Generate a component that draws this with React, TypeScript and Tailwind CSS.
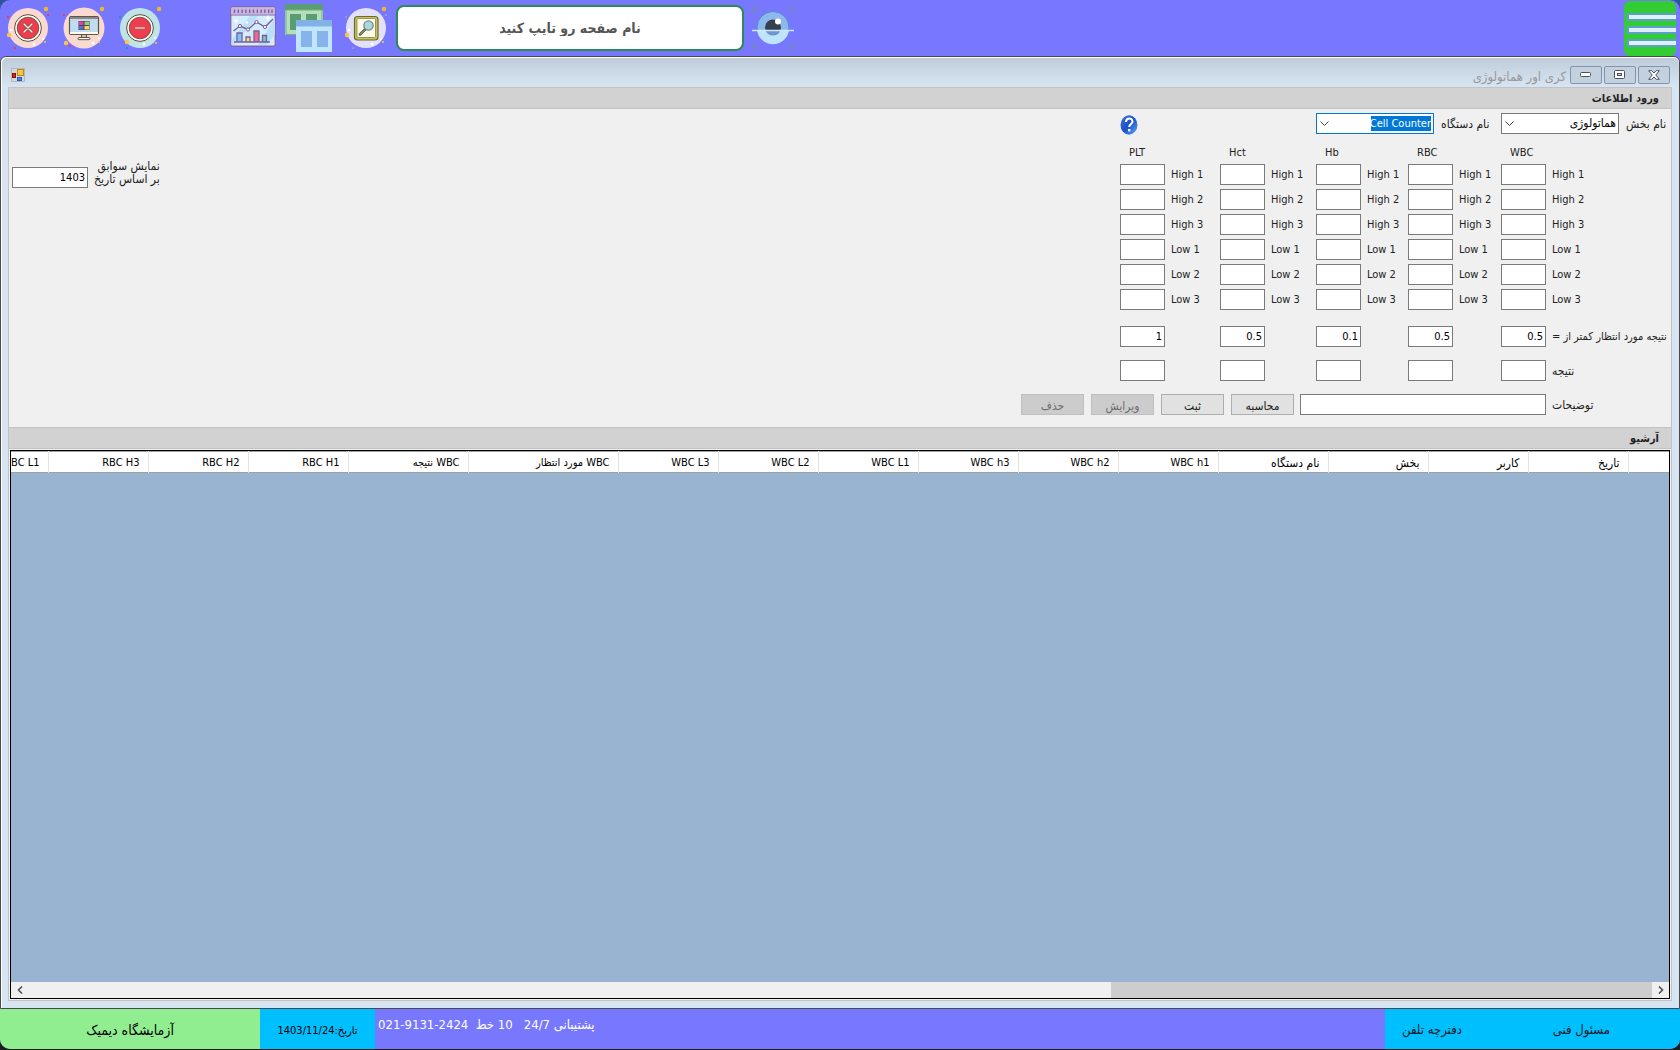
import React from "react";

const COLUMNS = [
  { name: "PLT", limit: "1" },
  { name: "Hct", limit: "0.5" },
  { name: "Hb", limit: "0.1" },
  { name: "RBC", limit: "0.5" },
  { name: "WBC", limit: "0.5" },
];

const LEVELS = ["High 1", "High 2", "High 3", "Low 1", "Low 2", "Low 3"];

const HEADINGS: { text: string; width: string }[] = [
  { text: "", width: "w-[41px]" },
  { text: "تاریخ", width: "w-[100px] text-xs" },
  { text: "کاربر", width: "w-[100px] text-xs" },
  { text: "بخش", width: "w-[100px] text-xs" },
  { text: "نام دستگاه", width: "w-[110px] text-xs" },
  { text: "WBC h1", width: "w-[100px]" },
  { text: "WBC h2", width: "w-[100px]" },
  { text: "WBC h3", width: "w-[100px]" },
  { text: "WBC L1", width: "w-[100px]" },
  { text: "WBC L2", width: "w-[100px]" },
  { text: "WBC L3", width: "w-[100px]" },
  { text: "WBC مورد انتظار", width: "w-[150px]" },
  { text: "WBC نتیجه", width: "w-[120px]" },
  { text: "RBC H1", width: "w-[100px]" },
  { text: "RBC H2", width: "w-[100px]" },
  { text: "RBC H3", width: "w-[100px]" },
  { text: "RBC L1", width: "w-[100px]" },
];

const GRID = "grid grid-cols-[100px_96px_92px_93px_170px]";
const BOX = "h-[21px] border border-[#7a7a7a] bg-white px-0.5 text-right text-black outline-none";

function Sparks({ a, b }: { a: string; b: string }) {
  return (
    <g>
      <circle cx="40" cy="3" r="2.2" fill="#f5b81f" />
      <circle cx="3" cy="29" r="2.2" fill="#fcc544" />
      <circle cx="39" cy="36" r="1.1" fill="#fcc544" />
      <rect x="1" y="10" width="2" height="2" fill={a} />
      <rect x="41" y="8" width="2" height="2" fill={b} />
      <rect x="8" y="41" width="2" height="2" fill={a} />
      <circle cx="5" cy="24" r="1.3" fill="#fff" />
      <circle cx="28" cy="38" r="1.5" fill="#fff" />
      <circle cx="37" cy="33" r="1" fill="#fff" />
    </g>
  );
}

function CloseIcon() {
  return (
    <svg viewBox="0 0 44 44" className="size-11">
      <circle cx="22" cy="22" r="20" fill="#fad9d0" />
      <Sparks a="#ee3c50" b="#ee3c50" />
      <circle cx="22" cy="22" r="13.4" fill="#fffdf0" stroke="#5f4a42" strokeWidth="1" />
      <circle cx="22" cy="22" r="10.8" fill="#ee3c50" stroke="#5f4a42" strokeWidth="0.8" />
      <path d="M18 18l8 8M26 18l-8 8" stroke="#7d4a42" strokeWidth="2.6" strokeLinecap="round" />
      <path d="M18 18l8 8M26 18l-8 8" stroke="#fff3dc" strokeWidth="1.4" strokeLinecap="round" />
    </svg>
  );
}

function MonitorIcon() {
  return (
    <svg viewBox="0 0 44 44" className="size-11">
      <circle cx="22" cy="22" r="20.5" fill="#fad9d0" />
      <circle cx="40" cy="3" r="2.2" fill="#f5b81f" />
      <circle cx="4" cy="37" r="2.2" fill="#fcc544" />
      <circle cx="37" cy="36" r="1.1" fill="#fcc544" />
      <rect x="1" y="8" width="2" height="2" fill="#ee3c50" />
      <rect x="7" y="39" width="2" height="2" fill="#ee3c50" />
      <circle cx="31" cy="37" r="1.5" fill="#fff" />
      <circle cx="37" cy="32" r="1" fill="#fff" />
      <path d="M19.5 28h5v4h-5z" fill="#c9c2ad" stroke="#5f544a" />
      <rect x="16" y="31.5" width="12" height="2.2" rx="1" fill="#fffdf0" stroke="#5f544a" />
      <rect x="7.500" y="10.500" width="29" height="18" rx="1.500" fill="#c0dcf0" stroke="#5f544a" strokeWidth="1.200" />
      <path d="M8 11h28v2H8z" fill="#8d8585" />
      <path d="M8 26h28v2H8z" fill="#fffdf0" />
      <rect x="16.500" y="15" width="11" height="9" fill="#4a4650" />
      <path d="M17 15.500h4.500v3.500H17z" fill="#ee3c9a" />
      <path d="M22.500 15.500H27v3.500h-4.500z" fill="#8bcf80" />
      <path d="M17 20h4.500v3.500H17z" fill="#5570d8" />
      <path d="M22.500 20H27v3.500h-4.500z" fill="#f8dd50" />
    </svg>
  );
}

function MinusIcon() {
  return (
    <svg viewBox="0 0 44 44" className="size-11">
      <circle cx="22" cy="22" r="20" fill="#bfe4e6" />
      <circle cx="41" cy="3" r="2.2" fill="#f5b81f" />
      <circle cx="9" cy="36" r="2.2" fill="#fcc544" />
      <circle cx="38" cy="37" r="1.1" fill="#fcc544" />
      <rect x="1" y="10" width="2" height="2" fill="#1d9aa8" />
      <rect x="8" y="41" width="2" height="2" fill="#1d9aa8" />
      <circle cx="26" cy="38" r="1.5" fill="#fff" />
      <circle cx="37" cy="32" r="1" fill="#fff" />
      <circle cx="22" cy="22" r="13.4" fill="#fffdf0" stroke="#5f4a42" strokeWidth="1" />
      <circle cx="22" cy="22" r="10.8" fill="#ee3c50" stroke="#5f4a42" strokeWidth="0.8" />
      <rect x="17" y="21" width="10" height="2" fill="#cfc0ac" stroke="#9a6a60" strokeWidth="0.4" />
    </svg>
  );
}

function ChartIcon() {
  return (
    <svg viewBox="0 0 46 41" className="h-[41px] w-[46px]">
      <rect x="0.700" y="0.700" width="44.600" height="39.600" rx="1.500" fill="#d3edfd" stroke="#8a66a8" strokeWidth="1.400" />
      <path d="M28 39L45 12v16l-8 11zM1.500 34L20 10h8L4 39H1.500z" fill="#b9e0f8" />
      <path d="M1.400 1.400h43.200v7H1.400z" fill="#c7b6e0" />
      <path d="M1 9h44" stroke="#8a66a8" strokeWidth="1.200" />
      <path d="M4.500 3.500v3.500M8.300 3.500v3.500M12.100 3.500v3.500M15.900 3.500v3.500M19.700 3.500v3.500M23.500 3.500v3.500M27.300 3.500v3.500M31.100 3.500v3.500M34.900 3.500v3.500M38.700 3.500v3.500M42 3.500v3.500" stroke="#7c5c9c" strokeWidth="1.300" />
      <path d="M6 12l.9 2.100 2.100.9-2.100.9L6 18l-.9-2.100L3 15l2.100-.9zM17 15l1.500 1.500L17 18l-1.500-1.500zM38 9l1 2 2 1-2 1-1 2-1-2-2-1 2-1z" fill="#fff" />
      <path d="M7 27h5v9H7z" fill="#7cc6f4" />
      <path d="M16 31h4v5h-4z" fill="#f8dc78" />
      <path d="M24 25h5v11h-5z" fill="#f06a8c" />
      <path d="M32.500 29.500h4v6.500h-4z" fill="#76ccb0" />
      <path d="M4 36h36M7 36v-9h5v9M16 36v-5h4v5M24 36V25h5v11M32.500 36v-6.500h4V36" fill="none" stroke="#7c5c9c" strokeWidth="1.300" />
      <path d="M3.500 25L10 20l8 3.500 8.500-7.500 8.500 5 8-8" fill="none" stroke="#7c5c9c" strokeWidth="1.400" />
      <g fill="#fff" stroke="#7c5c9c">
        <circle cx="10" cy="20" r="1.600" />
        <circle cx="18" cy="23.500" r="1.600" />
        <circle cx="26.500" cy="16" r="1.600" />
        <circle cx="35" cy="21" r="1.600" />
      </g>
    </svg>
  );
}

function WindowsIcon() {
  return (
    <svg viewBox="0 0 48 48" className="size-12">
      <path d="M0 0h38v31H0z" fill="#b5dfb8" />
      <path d="M0 0h38v6H0z" fill="#5c9c72" />
      <path d="M1 6h36v24.500H1z" fill="none" stroke="#6fb085" />
      <path d="M5 10h11v16H5zM21 10h11v16H21z" fill="#5c9c72" />
      <path d="M11 16h36v32H11z" fill="#c0e6fd" />
      <path d="M11 16h36v6.500H11z" fill="#82b1e8" />
      <path d="M16 27h11v16H16zM32 27h11v16H32z" fill="#86b3ec" />
    </svg>
  );
}

function FindIcon() {
  return (
    <svg viewBox="0 0 44 44" className="size-11">
      <circle cx="22" cy="22" r="20" fill="#e2e1f7" />
      <Sparks a="#9a98d0" b="#9a98d0" />
      <rect x="10.500" y="10.500" width="23.500" height="23.500" rx="3" fill="#c4c45c" stroke="#6e6a2c" strokeWidth="1.200" />
      <rect x="13" y="12.500" width="18.500" height="19" rx="1" fill="#fffcec" stroke="#7a7636" strokeWidth="0.700" />
      <path d="M16 28.500l5.500-5.500" stroke="#5a6a48" strokeWidth="2.800" strokeLinecap="round" />
      <path d="M16.300 28.200l4-4" stroke="#9ab070" strokeWidth="1" />
      <circle cx="24.500" cy="19.500" r="4.600" fill="#a8d8dc" stroke="#7a8a94" strokeWidth="1.400" />
    </svg>
  );
}

function EyeIcon() {
  return (
    <svg viewBox="0 0 42 42" className="size-[42px]">
      <path d="M1 7V1h6M35 1h6v6M1 35v6h6M35 41h6v-6" fill="none" stroke="#7488b8" strokeWidth="1.600" />
      <circle cx="21" cy="20.500" r="16" fill="#8cb8ee" stroke="#5a86cc" />
      <circle cx="21" cy="20.500" r="8" fill="#35404e" />
      <path d="M5 23.500a16.200 16.200 0 0 0 32 0z" fill="#bfe5fd" />
      <path d="M13.600 23.500a8 8 0 0 0 14.800 0z" fill="#6f96cc" />
      <circle cx="26" cy="14.500" r="3" fill="#fff" />
      <path d="M0 23.500h42" stroke="#cfe8ff" strokeWidth="1.400" />
    </svg>
  );
}

function FormIcon() {
  return (
    <svg viewBox="0 0 14 14" className="size-3.5">
      <rect x="0.500" y="0.500" width="13" height="13" fill="#d4d8dc" stroke="#b4b8bc" />
      <rect x="6.500" y="1.500" width="6" height="6" fill="#f8c838" stroke="#b88818" />
      <rect x="1.500" y="5.500" width="3" height="4" fill="#d82818" stroke="#8c1008" />
      <rect x="6.500" y="9.500" width="4" height="3" fill="#4888e8" stroke="#2858b8" />
    </svg>
  );
}

function HelpIcon() {
  return (
    <svg viewBox="0 0 18 20" className="h-5 w-[18px]">
      <defs>
        <linearGradient id="help" x1="0" y1="0" x2="1" y2="1">
          <stop offset="0" stopColor="#3f74e0" />
          <stop offset="0.500" stopColor="#1c4fc8" />
          <stop offset="1" stopColor="#5fb0ff" />
        </linearGradient>
      </defs>
      <ellipse cx="9" cy="10" rx="8.500" ry="9.700" fill="url(#help)" />
      <path d="M6 7c0-4.500 6.500-4.500 6.500-.5 0 2.500-3.300 2.500-3.300 5.500" fill="none" stroke="#fff" strokeWidth="2" />
      <rect x="8" y="14" width="2.400" height="2.400" fill="#fff" />
    </svg>
  );
}

function ToolButton({ label, children, className = "" }: { label: string; children: React.ReactNode; className?: string }) {
  return (
    <button type="button" aria-label={label} className={`shrink-0 ${className}`}>
      {children}
    </button>
  );
}

function SectionHeader({ children }: { children: React.ReactNode }) {
  return (
    <h2 dir="rtl" className="flex h-[22px] shrink-0 items-center border-y border-[#c3c3c3] bg-[#d2d2d2] px-3 pt-0.5 font-bold text-[#222]">
      {children}
    </h2>
  );
}

function Combo({ id, value, active = false }: { id: string; value: string; active?: boolean }) {
  return (
    <div className={`relative h-[21px] w-[118px] border bg-white py-0.5 pr-0.5 ${active ? "border-[#0078d7]" : "border-[#7a7a7a]"}`}>
      <select
        id={id}
        dir="rtl"
        className={`block h-[15px] w-full appearance-none leading-[15px] outline-none ${active ? "bg-[#0078d7] bg-clip-content pl-[54px] text-white" : "pl-5 text-xs text-black"}`}
      >
        <option>{value}</option>
      </select>
      <svg viewBox="0 0 9 5" className="pointer-events-none absolute top-[7px] left-[3px] h-[5px] w-[9px]">
        <path d="M.5.500l4 4 4-4" fill="none" stroke="#444" />
      </svg>
    </div>
  );
}

function Action({ children, disabled = false }: { children: string; disabled?: boolean }) {
  return (
    <button
      type="button"
      disabled={disabled}
      className={`h-[21px] w-[63px] border pt-0.5 text-xs ${disabled ? "border-[#bfbfbf] bg-[#cccccc] text-[#6d6d6d]" : "border-[#adadad] bg-[#e1e1e1] text-[#222]"}`}
    >
      {children}
    </button>
  );
}

function CaptionButton({ label, children }: { label: string; children: React.ReactNode }) {
  return (
    <button type="button" aria-label={label} className="flex h-[18px] w-8 items-center justify-center rounded-xs border border-[#8593ad] bg-[#c3d1df]">
      {children}
    </button>
  );
}

function TopBar() {
  return (
    <header className="shrink-0 bg-[#2a5599]">
      <div className="flex h-14 items-center rounded-t-[10px] bg-[#7878ff] pr-1 pl-1.5">
        <ToolButton label="بستن"><CloseIcon /></ToolButton>
        <ToolButton label="دسکتاپ" className="ml-3"><MonitorIcon /></ToolButton>
        <ToolButton label="کوچک کردن" className="ml-3"><MinusIcon /></ToolButton>
        <ToolButton label="نمودار" className="mb-1 ml-[68px]"><ChartIcon /></ToolButton>
        <ToolButton label="پنجره ها" className="ml-[9px]"><WindowsIcon /></ToolButton>
        <ToolButton label="جستجو" className="ml-[11px]"><FindIcon /></ToolButton>
        <input
          type="text"
          dir="rtl"
          aria-label="نام صفحه"
          placeholder="نام صفحه رو تایپ کنید"
          className="ml-2 h-[46px] w-[348px] rounded-lg border-2 border-[#2e8b57] bg-white text-center text-sm font-bold outline-none placeholder:text-[#555]"
        />
        <ToolButton label="نمایش" className="ml-2"><EyeIcon /></ToolButton>
        <button type="button" aria-label="منو" className="ml-auto flex h-[55px] w-[52px] flex-col justify-center gap-[5px] rounded-md bg-[#32cd32] pt-[3px] pl-[3px]">
          <span className="h-2 border-2 border-r-0 border-[#5aa0c8] bg-[#e0effc]" />
          <span className="h-2 border-2 border-r-0 border-[#5aa0c8] bg-[#e0effc]" />
          <span className="h-2 border-2 border-r-0 border-[#5aa0c8] bg-[#e0effc]" />
        </button>
      </div>
    </header>
  );
}

function TitleBar() {
  return (
    <div className="flex h-[29px] shrink-0 items-center pt-1 pr-0.5 pl-[3px]">
      <FormIcon />
      <h1 dir="rtl" className="mr-1 ml-auto pt-1 text-[13px] text-[#999]">کری اور هماتولوژی</h1>
      <div className="flex gap-0.5">
        <CaptionButton label="کوچک کردن">
          <svg viewBox="0 0 12 6" className="h-1.5 w-3"><rect x=".5" y=".5" width="10" height="4" rx="1" fill="#fff" stroke="#4a5060" /></svg>
        </CaptionButton>
        <CaptionButton label="بزرگ کردن">
          <svg viewBox="0 0 12 10" className="h-2.5 w-3">
            <rect x=".5" y=".5" width="10" height="8" rx="1" fill="#fff" stroke="#4a5060" />
            <rect x="3.500" y="3.500" width="4" height="2" fill="#c3d1df" stroke="#4a5060" />
          </svg>
        </CaptionButton>
        <CaptionButton label="بستن">
          <svg viewBox="0 0 12 10" className="h-2.5 w-3">
            <path d="M.7.700h3L6 3 8.300.700h3L7.800 5l3.500 4.300h-3L6 7 3.700 9.300h-3L4.200 5z" fill="#fff" stroke="#4a5060" />
          </svg>
        </CaptionButton>
      </div>
    </div>
  );
}

function EntryForm() {
  return (
    <form className="flex shrink-0 items-start justify-between overflow-hidden bg-[#f0f0f0] pt-1 pb-3">
      <div className="flex items-end pt-[47px] pl-[3px]">
        <input id="year" type="text" defaultValue="1403" className={`${BOX} w-[76px]`} />
        <label htmlFor="year" dir="rtl" className="mb-0.5 ml-1.5 text-xs leading-[13px]">
          نمایش سوابق
          <br />
          بر اساس تاریخ
        </label>
      </div>

      <div className="flex flex-col items-end">
        <div className="flex h-[21px] items-start">
          <button type="button" aria-label="راهنما" className="w-[196px] pt-0.5"><HelpIcon /></button>
          <div className="flex w-[185px] items-center gap-[7px]">
            <Combo id="device" value="Cell Counter" active />
            <label htmlFor="device" dir="rtl" className="text-xs whitespace-nowrap">نام دستگاه</label>
          </div>
          <div className="flex w-[170px] items-center gap-[7px]">
            <Combo id="section" value="هماتولوژی" />
            <label htmlFor="section" dir="rtl" className="text-xs whitespace-nowrap">نام بخش</label>
          </div>
        </div>

        <div className={`${GRID} mt-2.5 mb-0.5`}>
          {COLUMNS.map((c) => (
            <span key={c.name} className="pl-[9px] leading-[18px]">{c.name}</span>
          ))}
        </div>

        <div className="flex flex-col gap-1">
          {LEVELS.map((level) => (
            <div key={level} className={GRID}>
              {COLUMNS.map((c) => (
                <label key={c.name} className="flex items-center gap-1.5">
                  <input type="text" aria-label={`${c.name} ${level}`} className={`${BOX} w-[45px]`} />
                  {level}
                </label>
              ))}
            </div>
          ))}
        </div>

        <div className={`${GRID} mt-4`}>
          {COLUMNS.map((c, i) => (
            <label key={c.name} className="flex items-center gap-1.5">
              <input type="text" aria-label={`${c.name} limit`} defaultValue={c.limit} className={`${BOX} w-[45px] shrink-0`} />
              {i === 4 && <span dir="rtl" className="shrink-0 whitespace-nowrap">نتیجه مورد انتظار کمتر از =</span>}
            </label>
          ))}
        </div>

        <div className={`${GRID} mt-[13px]`}>
          {COLUMNS.map((c, i) => (
            <label key={c.name} className="flex items-center gap-1.5">
              <input type="text" aria-label={`${c.name} result`} className={`${BOX} w-[45px]`} />
              {i === 4 && <span dir="rtl" className="text-xs">نتیجه</span>}
            </label>
          ))}
        </div>

        <div className="mt-[13px] flex gap-1.5">
          <div className="flex gap-[7px]">
            <Action disabled>حذف</Action>
            <Action disabled>ویرایش</Action>
            <Action>ثبت</Action>
            <Action>محاسبه</Action>
          </div>
          <label className="flex w-[371px] items-center gap-1.5">
            <input type="text" className={`${BOX} w-[246px]`} />
            <span dir="rtl" className="text-xs">توضیحات</span>
          </label>
        </div>
      </div>
    </form>
  );
}

function Archive() {
  return (
    <div className="mx-px mt-px mb-px flex min-h-0 flex-1 flex-col border border-black bg-[#99b4d1]">
      <div dir="rtl" className="min-h-0 flex-1 overflow-hidden">
        <table className="w-full table-fixed border-collapse bg-white">
          <thead>
            <tr className="h-[21px] border-t border-b border-[#a0a0a0]">
              {HEADINGS.map((h, i) => (
                <th key={i} scope="col" className={`${h.width} border-l border-l-[#e3e3e3] px-2 pt-0.5 text-right leading-4 font-normal whitespace-nowrap text-black last:border-l-0`}>
                  {h.text}
                </th>
              ))}
            </tr>
          </thead>
        </table>
      </div>
      <div className="flex h-4 shrink-0 items-center bg-[#f0f0f0]">
        <button type="button" aria-label="چپ" className="flex w-[17px] justify-center">
          <svg viewBox="0 0 6 8" className="h-2 w-1.5"><path d="M5 .5L1.500 4 5 7.500" fill="none" stroke="#505050" strokeWidth="1.600" /></svg>
        </button>
        <div className="flex h-full flex-1 justify-end">
          <div className="h-full w-1/3 bg-[#cdcdcd]" />
        </div>
        <button type="button" aria-label="راست" className="flex w-[17px] justify-center">
          <svg viewBox="0 0 6 8" className="h-2 w-1.5"><path d="M1 .5L4.500 4 1 7.500" fill="none" stroke="#505050" strokeWidth="1.600" /></svg>
        </button>
      </div>
    </div>
  );
}

function StatusBar() {
  return (
    <footer className="shrink-0 bg-[#1c1c1c] pb-px">
      <div className="flex h-10 overflow-hidden rounded-b-[10px] bg-[#7878ff]">
        <div dir="rtl" className="flex w-[260px] items-center justify-center bg-[#90ee90] pt-0.5 text-sm text-black">آزمایشگاه دیمیک</div>
        <div dir="rtl" className="flex w-[115px] items-center justify-center bg-[#00bfff] pt-1 text-black">تاریخ:1403/11/24</div>
        <div dir="rtl" className="mr-auto pt-2 pl-[3px] text-[13px] leading-4 whitespace-pre text-white">پشتیبانی 24/7   10 خط  <bdi>021-9131-2424</bdi></div>
        <div className="flex w-[295px] items-center justify-between bg-[#00bfff] pt-0.5 pr-[70px] pl-[17px] text-[13px] text-[#10202c]">
          <button type="button">دفترچه تلفن</button>
          <button type="button">مسئول فنی</button>
        </div>
      </div>
    </footer>
  );
}

export default function App() {
  return (
    <div className="flex h-screen flex-col overflow-hidden bg-[#7878ff] font-['DejaVu_Sans_Condensed','DejaVu_Sans',sans-serif] text-[11px] leading-4 text-[#222]">
      <TopBar />
      <main className="flex min-h-0 flex-1 flex-col rounded-t-md border border-[#4a4a4a] bg-[#d7e4f2]">
        <div className="flex min-h-0 flex-1 flex-col rounded-t-md border-t border-l border-white bg-linear-to-b from-[#bfcddb] to-[#d7e4f2] to-3% pr-[7px] pb-[7px] pl-1.5">
          <TitleBar />
          <div className="flex min-h-0 flex-1 flex-col border border-t-0 border-[#c3c3c3] bg-[#f0f0f0]">
            <SectionHeader>ورود اطلاعات</SectionHeader>
            <EntryForm />
            <SectionHeader>آرشیو</SectionHeader>
            <Archive />
          </div>
        </div>
      </main>
      <StatusBar />
    </div>
  );
}
